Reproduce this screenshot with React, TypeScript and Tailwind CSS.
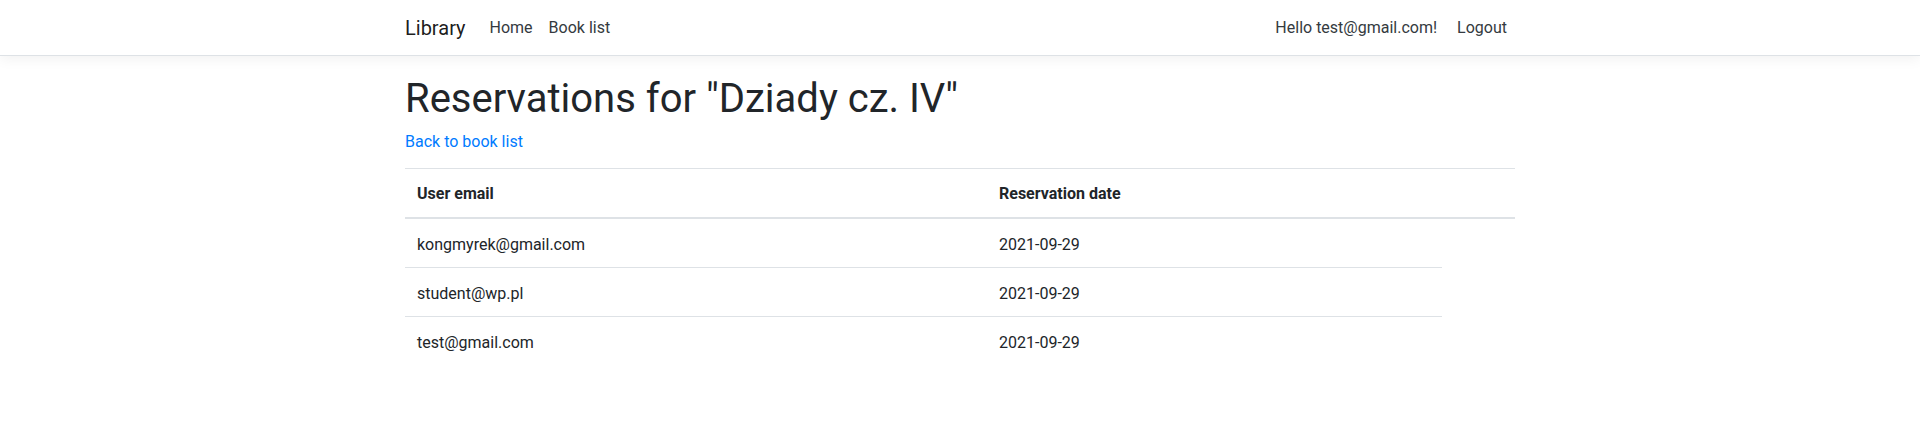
import React from 'react';

const reservations = [
  { email: 'kongmyrek@gmail.com', date: '2021-09-29' },
  { email: 'student@wp.pl', date: '2021-09-29' },
  { email: 'test@gmail.com', date: '2021-09-29' },
];

export default function App() {
  return (
    <div className="min-h-[425px] bg-white text-[16px] leading-[1.5] text-[#212529] font-['Segoe_UI','Roboto','Liberation_Sans',sans-serif]">
      <header>
        <nav className="mb-4 border-b border-[#dee2e6] bg-white py-2 shadow-[0_4px_12px_rgba(0,0,0,0.05)]">
          <div className="mx-auto flex h-[39px] w-[1140px] items-center justify-between px-[15px]">
            <div className="flex items-center">
              <a className="mr-4 text-[20px] leading-[30px] text-black/90">Library</a>
              <a className="px-2 text-[#343a40]">Home</a>
              <a className="px-2 text-[#343a40]">Book list</a>
            </div>
            <div className="flex items-center gap-1">
              <a className="px-2 text-[#343a40]">Hello test@gmail.com!</a>
              <button className="px-2 text-[#343a40]">Logout</button>
            </div>
          </div>
        </nav>
      </header>
      <div className="mx-auto w-[1140px] px-[15px]">
        <main className="pb-4">
          <h1 className="mb-[5px] pt-[3px] text-[40px] font-normal leading-[1.2]">Reservations for "Dziady cz. IV"</h1>
          <p className="mb-[14px] pt-[2px]">
            <a className="text-[#007bff]">Back to book list</a>
          </p>
          <table className="w-full border-collapse text-left">
            <colgroup>
              <col className="w-[582px]" />
              <col className="w-[455px]" />
              <col />
            </colgroup>
            <thead>
              <tr>
                <th className="border-t border-b-2 border-[#dee2e6] px-3 pt-[13px] pb-[11px] font-bold">User email</th>
                <th className="border-t border-b-2 border-[#dee2e6] px-3 pt-[13px] pb-[11px] font-bold">Reservation date</th>
                <th className="border-t border-b-2 border-[#dee2e6] px-3 pt-[13px] pb-[11px]"></th>
              </tr>
            </thead>
            <tbody>
              {reservations.map((r) => (
                <tr key={r.email}>
                  <td className="border-t border-[#dee2e6] px-3 pt-[14px] pb-[10px]">{r.email}</td>
                  <td className="border-t border-[#dee2e6] px-3 pt-[14px] pb-[10px]">{r.date}</td>
                </tr>
              ))}
            </tbody>
          </table>
        </main>
      </div>
    </div>
  );
}
